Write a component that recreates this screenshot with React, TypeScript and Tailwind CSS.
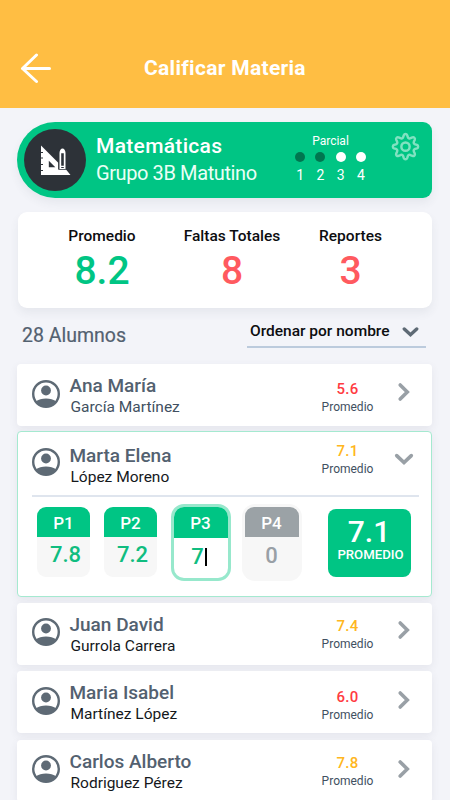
import clsx from 'clsx';

interface Student {
    name: string;
    lastName: string;
    average: string;
    averageClass: string;
    averageOffset: string;
    chevronOffset: string;
    muted?: boolean;
}

const students: Student[] = [
    { name: 'Ana María', lastName: 'García Martínez', average: '5.6', averageClass: 'text-[#ff3b41]', averageOffset: 'mt-[16px]', chevronOffset: 'mt-[18px]', muted: true },
    { name: 'Marta Elena', lastName: 'López Moreno', average: '7.1', averageClass: 'text-[#ffb620]', averageOffset: 'mt-[11px]', chevronOffset: 'mt-[18px]' },
    { name: 'Juan David', lastName: 'Gurrola Carrera', average: '7.4', averageClass: 'text-[#ffb620]', averageOffset: 'mt-[14.5px]', chevronOffset: 'mt-[17px]' },
    { name: 'Maria Isabel', lastName: 'Martínez López', average: '6.0', averageClass: 'text-[#ff3b41]', averageOffset: 'mt-[17px]', chevronOffset: 'mt-[18.5px]' },
    { name: 'Carlos Alberto', lastName: 'Rodriguez Pérez', average: '7.8', averageClass: 'text-[#ffb620]', averageOffset: 'mt-[14px]', chevronOffset: 'mt-[19px]' },
];

const partials = [
    { number: 1, done: true },
    { number: 2, done: true },
    { number: 3, done: false },
    { number: 4, done: false },
];

const stats = [
    { label: 'Promedio', value: '8.2', width: 'w-[112px]', color: 'text-[#00c584]' },
    { label: 'Faltas Totales', value: '8', width: 'w-[148px]', color: 'text-[#ff5a5f]' },
    { label: 'Reportes', value: '3', width: 'w-[89px]', color: 'text-[#ff5a5f]' },
];

function SubjectIcon() {
    return (
        <svg width="31" height="31" viewBox="0 0 31 31">
            <path d="M1 0.5 L18.5 18 V24.5 H26 L30.5 30 H1 V26 H3 V25 H1 V20 H3 V19 H1 V13.5 H3 V12.5 H1 V8 H3 V7 H1Z" fill="#fff" />
            <path d="M8.8 15.8 V22.3 H15.3Z" fill="#2d3238" />
            <path d="M18.2 24.6 V8 C18.2 5 19.8 2.5 22.6 2.5 C25.4 2.5 27 5 27 8 V24.6Z" fill="#2d3238" />
            <path d="M19.5 24 V8 C19.5 5.5 21 3.5 22.5 3.5 C24 3.5 25.5 5.5 25.5 8 V24Z" fill="#fff" />
            <path d="M21.2 20.8 V8.2 H23.8 V20.8Z M21.2 22 H23.8 V23 H21.2Z" fill="#2d3238" />
        </svg>
    );
}

function GearIcon() {
    return (
        <svg width="31" height="31" viewBox="0 0 24 24" fill="none" stroke="#80e2c1" strokeWidth="1.9" strokeLinejoin="round">
            <circle cx="12" cy="12.1" r="3.2" />
            <path d="M10.7 2.2a1.4 1.4 0 0 1 2.6 0l.5 1.5c.3.9 1.3 1.3 2.1.9l1.5-.7a1.4 1.4 0 0 1 1.8 1.8l-.7 1.5c-.4.8 0 1.8.9 2.1l1.5.5a1.4 1.4 0 0 1 0 2.6l-1.5.5c-.9.3-1.3 1.3-.9 2.1l.7 1.5a1.4 1.4 0 0 1-1.8 1.8l-1.5-.7c-.8-.4-1.8 0-2.1.9l-.5 1.5a1.4 1.4 0 0 1-2.6 0l-.5-1.5c-.3-.9-1.3-1.3-2.1-.9l-1.5.7a1.4 1.4 0 0 1-1.8-1.8l.7-1.5c.4-.8 0-1.8-.9-2.1l-1.5-.5a1.4 1.4 0 0 1 0-2.6l1.5-.5c.9-.3 1.3-1.3.9-2.1l-.7-1.5a1.4 1.4 0 0 1 1.8-1.8l1.5.7c.8.4 1.8 0 2.1-.9z" transform="translate(0 1)" />
        </svg>
    );
}

function UserIcon() {
    return (
        <svg className="w-7 h-7 shrink-0" viewBox="0 0 28 28">
            <circle cx="14" cy="14" r="12.8" fill="#fff" stroke="#5e6a75" strokeWidth="2.4" />
            <circle cx="14" cy="10.5" r="4.9" fill="#5e6a75" />
            <path d="M3.4 21.6 C6.5 19.6 10 18.6 14 18.6 C18 18.6 21.5 19.6 24.6 21.6 C22 25 18 27 14 27 C10 27 6 25 3.4 21.6Z" fill="#5e6a75" />
        </svg>
    );
}

function Chevron({ down }: { down?: boolean }) {
    return (
        <svg className="w-5 h-5" viewBox="0 0 20 20" fill="none" stroke="#99a0a6" strokeWidth="3.6" strokeLinecap="round">
            <path d={down ? 'M2.7 6.6 L10 13.6 L17.3 6.6' : 'M6.2 2.9 L13.3 10 L6.2 17.1'} />
        </svg>
    );
}

function StudentSummary({ student, open }: { student: Student; open?: boolean }) {
    return (
        <div className="flex items-start">
            <div className={open ? 'mt-[3px]' : 'mt-[4.5px]'}>
                <UserIcon />
            </div>
            <div className="ml-[10px] w-[240px]">
                <p className="text-[19px] leading-[22px] font-medium text-[#536170]">{student.name}</p>
                <p className={clsx('text-[15.5px] leading-5 pl-px', student.muted ? 'text-[#415061]' : 'text-[#15181c]')}>{student.lastName}</p>
            </div>
            <div className={clsx('w-[76px] -mt-[11px] text-center', open && '-mt-[14px]')}>
                <div className={student.averageOffset}>
                    <p className={clsx('text-[15px] leading-[18px] font-medium tracking-[0.3px]', student.averageClass)}>{student.average}</p>
                    <p className="text-[12px] leading-[18px] text-[#415061]">Promedio</p>
                </div>
            </div>
            <div className={clsx('ml-[8px] -mt-[11px]', open && '-mt-[14px]')}>
                <div className={student.chevronOffset}>
                    <Chevron down={open} />
                </div>
            </div>
        </div>
    );
}

function StudentRow({ student }: { student: Student }) {
    return (
        <div className="h-[62px] pl-[14.5px] pt-[11px] bg-white rounded-[4px] shadow-[0_3px_8px_rgba(60,70,90,0.08)]">
            <StudentSummary student={student} />
        </div>
    );
}

function Grade({ label, value }: { label: string; value: string }) {
    return (
        <div className="w-[53px] h-[70px] mt-[3px] rounded-[9px] bg-[#f7f7f7] overflow-hidden text-center">
            <p className="h-[30px] bg-[#00c584] text-white text-[17px] leading-[32px] font-medium">{label}</p>
            <p className="pl-1 text-[22px] leading-[36px] font-medium text-[#10bd80]">{value}</p>
        </div>
    );
}

export default function App() {
    return (
        <div className="w-[450px] h-[800px] overflow-hidden bg-[#f3f4f9] font-['Roboto',sans-serif]">
            <header className="h-[108px] bg-[#ffbe43] flex items-start pt-[53px] pl-[20px]">
                <svg width="32" height="32" viewBox="0 0 32 32" fill="none" stroke="#fff" strokeWidth="3" strokeLinecap="round" strokeLinejoin="round">
                    <path d="M16.5 2 L2.5 15.5 L16.5 28.5 M2.5 15.5 H29.5" />
                </svg>
                <h1 className="ml-[92px] text-[21px] leading-[30px] font-bold text-white tracking-[0.3px]">Calificar Materia</h1>
            </header>

            <main className="pl-[17px] w-[432px] pt-[14px]">
                {/* Subject */}
                <section className="h-[76px] flex items-start bg-[#00c584] rounded-l-[38px] rounded-r-[9px] shadow-[0_5px_10px_rgba(60,70,90,0.07)]">
                    <div className="w-[62px] h-[62px] ml-[7px] mt-[7px] rounded-full bg-[#2d3238] flex items-center justify-center">
                        <SubjectIcon />
                    </div>
                    <div className="ml-[10px] mt-[11px] w-[183px] text-white whitespace-nowrap">
                        <h2 className="text-[21px] leading-[26px] font-medium tracking-[0.3px]">Matemáticas</h2>
                        <p className="text-[20px] leading-[28px] tracking-[-0.4px] text-[#eafff6]">Grupo 3B Matutino</p>
                    </div>
                    <div className="ml-[11px] mt-[12px] w-[81px] text-center text-white">
                        <p className="text-[12px] leading-[14px]">Parcial</p>
                        <div className="grid grid-cols-4 mt-[3.5px]">
                            {partials.map(p => (
                                <div key={p.number} className="flex flex-col items-center">
                                    <span className={clsx('w-[10px] h-[10px] rounded-full', p.done ? 'bg-[#007650]' : 'bg-white')} />
                                    <span className="mt-[4.5px] text-[14px] leading-[18px]">{p.number}</span>
                                </div>
                            ))}
                        </div>
                    </div>
                    <div className="ml-[18.5px] mt-[9px]">
                        <GearIcon />
                    </div>
                </section>

                {/* Group stats */}
                <section className="ml-px mt-[14px] h-[96px] flex pl-[28px] pt-[14px] bg-white rounded-[9px] shadow-[0_5px_10px_rgba(60,70,90,0.07)]">
                    {stats.map(stat => (
                        <div key={stat.label} className={clsx('text-center', stat.width)}>
                            <p className="text-[15.5px] leading-[20px] font-medium text-[#0c0d10]">{stat.label}</p>
                            <p className={clsx('mt-[3px] text-[39px] leading-[44px] font-medium', stat.color)}>{stat.value}</p>
                        </div>
                    ))}
                </section>

                <div className="h-[56px] flex justify-between pl-[5px] pr-[6px]">
                    <p className="mt-[15px] text-[19.5px] leading-[26px] text-[#536170] [-webkit-text-stroke:0.2px_#536170]">28 Alumnos</p>
                    <div className="w-[179px] h-[40px] border-b-2 border-[#bccbdd] flex items-start pl-[3px]">
                        <span className="mt-[13px] text-[15.5px] leading-[20px] font-medium text-[#0c0d10] whitespace-nowrap">Ordenar por nombre</span>
                        <svg className="ml-auto mr-[7px] mt-[18px]" width="17" height="12" viewBox="0 0 17 12" fill="none" stroke="#5e6a75" strokeWidth="3.4" strokeLinecap="round">
                            <path d="M2.3 3 L8.5 8.7 L14.7 3" />
                        </svg>
                    </div>
                </div>

                {/* Students */}
                <section className="flex flex-col">
                    <StudentRow student={students[0]} />

                    <div className="mt-[5px] h-[165.5px] bg-white rounded-[4px] border border-[#a5e9d0] pl-[13.5px] pt-[13px] shadow-[0_3px_8px_rgba(60,70,90,0.08)]">
                        <StudentSummary student={students[1]} open />
                        <div className="mt-[8px] ml-[0.5px] w-[387px] h-[2px] bg-[#dfe5ee]" />
                        <div className="flex items-start mt-[7px] pl-[5.5px]">
                            <Grade label="P1" value="7.8" />
                            <div className="ml-[14px]">
                                <Grade label="P2" value="7.2" />
                            </div>
                            <div className="ml-[13.5px] w-[60px] h-[77px] border-[3px] border-[#97e8cc] rounded-[13px] overflow-hidden bg-white">
                                <p className="h-[31px] bg-[#00c584] text-white text-center text-[17px] leading-[32px] font-medium">P3</p>
                                <div className="flex items-center justify-center mt-[9px] pr-[3px]">
                                    <span className="text-[22px] leading-[20px] font-medium text-[#10bd80]">7</span>
                                    <span className="ml-px w-[2px] h-[18px] bg-black" />
                                </div>
                            </div>
                            <div className="ml-[11px] w-[60px] h-[77px] p-[3px] rounded-[13px] bg-[#f7f7f7] text-center">
                                <p className="h-[30px] rounded-t-[9px] bg-[#9ba2a6] text-white text-[17px] leading-[32px] font-medium">P4</p>
                                <p className="text-[22px] leading-[37px] font-medium text-[#99a0a6]">0</p>
                            </div>
                            <div className="ml-[26px] mt-[5px] w-[83px] h-[68px] rounded-[8px] bg-[#00c584] text-white text-center">
                                <p className="pt-[9px] text-[30px] leading-[27px] font-medium">7.1</p>
                                <p className="text-[13.2px] leading-[20px] font-medium pl-[3px]">PROMEDIO</p>
                            </div>
                        </div>
                    </div>

                    <div className="flex flex-col gap-[6.5px] mt-[6px]">
                        {students.slice(2).map(s => (
                            <StudentRow key={s.name} student={s} />
                        ))}
                    </div>
                </section>
            </main>
        </div>
    );
}
